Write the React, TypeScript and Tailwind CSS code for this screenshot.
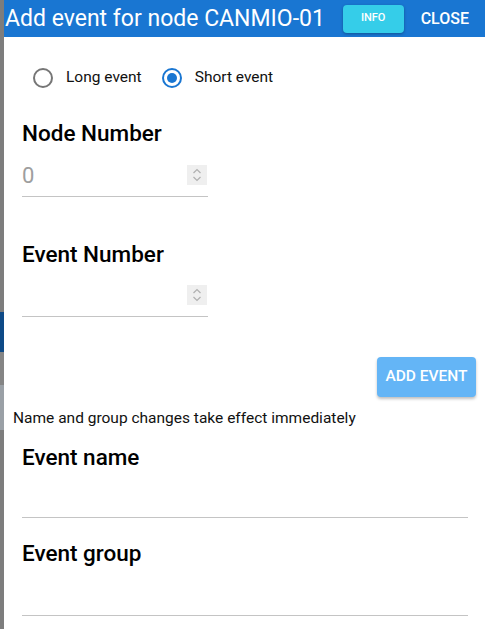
export default function App() {
  return (
    <div
      className="flex h-[629px] w-[485px] overflow-hidden bg-white"
      style={{ fontFamily: "Roboto, 'Liberation Sans', sans-serif" }}
    >
      {/* backdrop strip */}
      <div className="flex w-[4px] shrink-0 flex-col bg-[#7d7d7d]">
        <div className="h-[312px]" />
        <div className="h-[40px] bg-[#0e4a87]" />
        <div className="h-[33px] bg-[#858585]" />
        <div className="h-[45px] bg-[#9aa0a6]" />
        <div className="flex-1 bg-[#7d7d7d]" />
      </div>

      <div className="flex flex-1 flex-col">
        {/* Header */}
        <div className="flex h-[37px] shrink-0 items-center bg-[#1976d2] pl-[1px] pr-[16px] text-white">
          <div className="text-[23px] leading-none">Add event for node CANMIO-01</div>
          <button className="ml-auto h-[28px] w-[61px] rounded-[4px] bg-[#35cde9] text-[11px] font-medium shadow-[0_1px_3px_rgba(0,0,0,0.3)]">
            INFO
          </button>
          <button className="ml-[17px] text-[16px] font-medium">CLOSE</button>
        </div>

        {/* Radios */}
        <div className="mt-[31px] flex h-[20px] items-center pl-[29px] text-[15.5px] text-[#111]">
          <span className="h-[20px] w-[20px] rounded-full border-2 border-[#767676]" />
          <span className="ml-[13px]">Long event</span>
          <span className="ml-[20px] flex h-[20px] w-[20px] items-center justify-center rounded-full border-2 border-[#1976d2]">
            <span className="h-[10px] w-[10px] rounded-full bg-[#1976d2]" />
          </span>
          <span className="ml-[13px]">Short event</span>
        </div>

        {/* Node Number */}
        <div className="mt-[32px] pl-[18px]">
          <div className="text-[22.5px] font-medium leading-[26px] text-black">Node Number</div>
          <div className="mt-[16px] flex h-[35px] w-[186px] items-center justify-between border-b border-[#c4c4c4] pb-[8px]">
            <span className="text-[22px] text-[#9e9e9e]">0</span>
            <Spinner />
          </div>
        </div>

        {/* Event Number */}
        <div className="mt-[44px] pl-[18px]">
          <div className="text-[22.5px] font-medium leading-[26px] text-black">Event Number</div>
          <div className="mt-[15px] flex h-[35px] w-[186px] items-center justify-between border-b border-[#c4c4c4] pb-[8px]">
            <span />
            <Spinner />
          </div>
        </div>

        <div className="mt-[40px] flex justify-end pr-[9px]">
          <button className="h-[40px] w-[99px] rounded-[4px] bg-[#64b5f6] text-[15.5px] font-medium text-white shadow-[0_2px_3px_rgba(0,0,0,0.25)]">
            ADD EVENT
          </button>
        </div>

        <div className="mt-[11px] pl-[9px] text-[15.5px] leading-[20px] text-[#111]">
          Name and group changes take effect immediately
        </div>

        <div className="mt-[16px] pl-[18px] pr-[17px]">
          <div className="text-[22.5px] font-medium leading-[26px] text-black">Event name</div>
          <div className="h-[48px] border-b border-[#c4c4c4]" />
        </div>

        <div className="mt-[22px] pl-[18px] pr-[17px]">
          <div className="text-[22.5px] font-medium leading-[26px] text-black">Event group</div>
          <div className="h-[50px] border-b border-[#c4c4c4]" />
        </div>
      </div>
    </div>
  );
}

function Spinner() {
  return (
    <span className="mr-[1px] flex h-[20px] w-[20px] items-center justify-center bg-[#efefef]">
      <svg width="12" height="16" viewBox="0 0 12 16" fill="none" stroke="#b0b0b0" strokeWidth="1.2">
        <path d="M2.5 6 L6 2.5 L9.5 6" />
        <path d="M2.5 10 L6 13.5 L9.5 10" />
      </svg>
    </span>
  );
}
